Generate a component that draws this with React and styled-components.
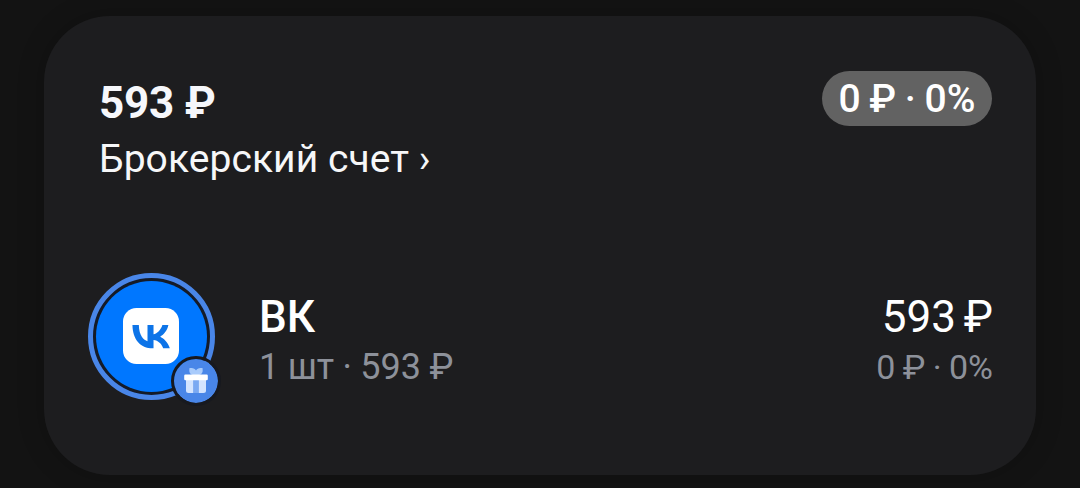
import React from 'react';
import styled, { createGlobalStyle } from 'styled-components';

const GlobalStyle = createGlobalStyle`
    * {
        box-sizing: border-box;
    }

    body {
        margin: 0;
        background-color: #131313;
        font-family: Roboto, "Liberation Sans", sans-serif;
    }
`;

const Page = styled.main`
    height: 488px;
    padding: 16px 44px 13px;
    overflow: hidden;
`;

const Card = styled.section`
    height: 459px;
    padding: 55px 44px 0 55px;
    border-radius: 66px;
    background-color: #1d1d1f;
    box-shadow: 0 0 28px rgba(0, 0, 0, 0.2);
`;

const CardHeader = styled.header`
    height: 202px;
    display: flex;
    justify-content: space-between;
    align-items: flex-start;
`;

const Account = styled.div`
    padding-top: 4px;
`;

const Total = styled.h1`
    margin: 0;
    font-size: 44px;
    font-weight: 700;
    line-height: 56px;
    letter-spacing: -0.2px;
    color: #f6f7fb;
`;

const AccountName = styled.p`
    margin: 0;
    font-size: 39px;
    line-height: 56px;
    letter-spacing: 0.06px;
    color: #f6f7f8;
`;

const Change = styled.span`
    width: 170px;
    height: 55px;
    display: flex;
    justify-content: center;
    align-items: center;
    border-radius: 28px;
    background-color: #626262;
    color: #fff;
    font-size: 39px;
    font-weight: 500;
    word-spacing: -1px;
    white-space: nowrap;
`;

const Position = styled.div`
    display: flex;
    align-items: flex-start;
    margin-left: -11px;
`;

const Avatar = styled.div`
    position: relative;
    width: 127px;
    height: 127px;
    padding: 3px;
    border: 5px solid #4986e8;
    border-radius: 50%;
    background-color: #141b28;
`;

const AvatarFill = styled.div`
    width: 100%;
    height: 100%;
    display: flex;
    justify-content: center;
    align-items: center;
    padding: 0 1px 1px 0;
    border-radius: 50%;
    background-color: #0077ff;
`;

const GiftBadge = styled.div`
    position: absolute;
    right: -11px;
    bottom: -11px;
    width: 50px;
    height: 50px;
    border: 3px solid #17191f;
    border-radius: 50%;
    background-color: #4986e8;
    background-clip: padding-box;

    svg {
        display: block;
    }
`;

const Info = styled.div`
    flex: 1;
    padding: 17px 0 0 44px;
    text-align: ${({ $end }) => ($end ? 'right' : 'left')};
    word-spacing: ${({ $end }) => ($end ? '-1px' : '-0.5px')};
    margin-right: ${({ $end }) => ($end ? '-1px' : '0')};
`;

const Primary = styled.p`
    margin: 0;
    font-size: 44px;
    font-weight: ${({ $bold }) => ($bold ? 500 : 400)};
    line-height: 54px;
    word-spacing: -3px;
    color: #fff;
`;

const Secondary = styled.p`
    margin: 0;
    font-size: ${({ $size }) => $size}px;
    line-height: 47px;
    color: #8d919a;
`;

const VkLogo = () => (
    <svg width="56" height="56" viewBox="0 0 48 48">
        <rect width="48" height="48" rx="11.5" fill="#fff" />
        <path
            fill="#0d74e8"
            d="M25.54 34.58c-10.94 0-17.18-7.5-17.44-19.98h5.48c.18 9.16 4.22 13.04 7.42 13.84V14.6h5.16v7.9c3.16-.34 6.48-3.94 7.6-7.9h5.16c-.86 4.88-4.46 8.48-7.02 9.96 2.56 1.2 6.66 4.34 8.22 10.02h-5.68c-1.22-3.8-4.26-6.74-8.28-7.14v7.14z"
        />
    </svg>
);

const GiftIcon = () => (
    <svg width="44" height="44" viewBox="0 0 44 44">
        <path fill="#a9cbfb" d="M22 16.500c-5 0-7.500-2-6.500-7.500 3.500 0 5.500.5 6.500 2.500 1-2 3-2.500 6.500-2.500 1 5.500-1.500 7.500-6.500 7.500z" />
        <path fill="#d3e4ff" d="M12 21h7.500v13H14.500a2.500 2.500 0 0 1-2.500-2.500z" />
        <path fill="#d3e4ff" d="M24.500 21H32v10.500a2.500 2.500 0 0 1-2.500 2.500h-5z" />
        <path fill="#7aa9f2" d="M19.500 21h5v13h-5z" />
        <rect x="10.200" y="15.500" width="23.600" height="5.700" rx="1.200" fill="#fff" />
    </svg>
);

export default function App() {
    return (
        <>
            <GlobalStyle />
            <Page>
                <Card>
                    <CardHeader>
                        <Account>
                            <Total>593 ₽</Total>
                            <AccountName>Брокерский счет ›</AccountName>
                        </Account>
                        <Change>0 ₽ · 0%</Change>
                    </CardHeader>
                    <Position>
                        <Avatar>
                            <AvatarFill>
                                <VkLogo />
                            </AvatarFill>
                            <GiftBadge>
                                <GiftIcon />
                            </GiftBadge>
                        </Avatar>
                        <Info>
                            <Primary $bold>ВК</Primary>
                            <Secondary $size={36}>1 шт · 593 ₽</Secondary>
                        </Info>
                        <Info $end>
                            <Primary>593 ₽</Primary>
                            <Secondary $size={34}>0 ₽ · 0%</Secondary>
                        </Info>
                    </Position>
                </Card>
            </Page>
        </>
    );
}
